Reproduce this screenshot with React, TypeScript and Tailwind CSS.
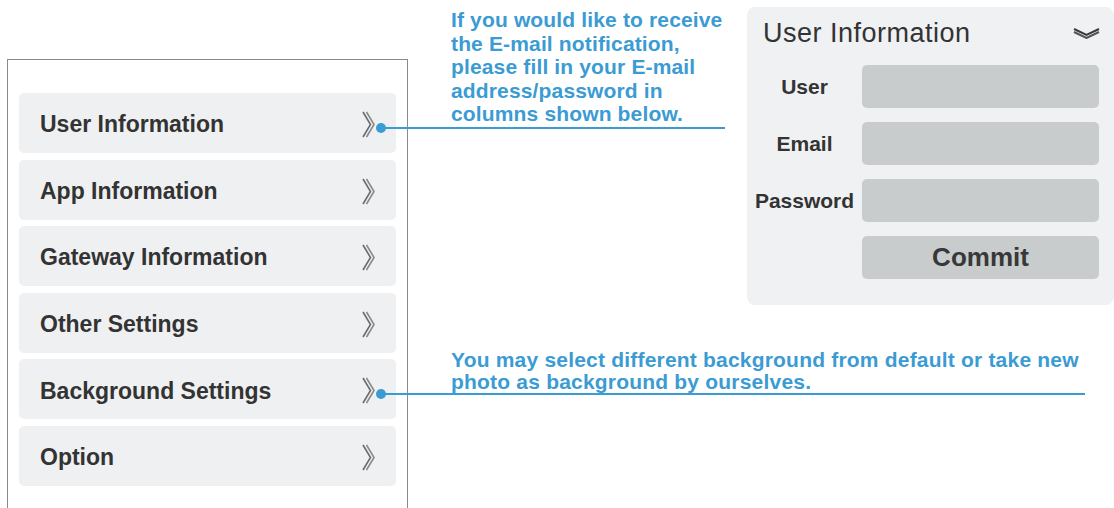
import React from "react";

const MENU = [
  "User Information",
  "App Information",
  "Gateway Information",
  "Other Settings",
  "Background Settings",
  "Option",
];

const FIELDS = ["User", "Email", "Password"];

// double-stroke chevron like the "》" glyph
const RightChevron = () => (
  <svg width="13" height="27" viewBox="0 0 13 27" fill="none">
    <polyline points="1,1 8.5,13.5 1,26" stroke="#6b6b6b" strokeWidth="1.6" strokeLinejoin="miter" />
    <polyline points="4.5,1 12,13.5 4.5,26" stroke="#8a8a8a" strokeWidth="1.6" strokeLinejoin="miter" />
  </svg>
);

const DownChevron = () => (
  <svg width="27" height="11" viewBox="0 0 27 11" fill="none">
    <polyline points="1,1 13.5,7 26,1" stroke="#3a3a3a" strokeWidth="2" />
    <polyline points="1,4 13.5,10 26,4" stroke="#555" strokeWidth="2" />
  </svg>
);

const MenuRow = ({ label }: { label: string }) => (
  <div className="flex h-[60px] items-center justify-between rounded-[5px] bg-[#eff0f2] pl-[21px] pr-[21px] pt-[3px]">
    <span className="text-[23px] font-bold text-[#333]">{label}</span>
    <RightChevron />
  </div>
);

const App = () => {
  return (
    <div
      className="relative flex h-[508px] w-[1114px] overflow-hidden bg-white"
      style={{ fontFamily: '"Liberation Sans", Arial, sans-serif' }}
    >
      {/* phone settings menu */}
      <div className="ml-[7px] mt-[59px] flex h-[449px] w-[401px] shrink-0 flex-col gap-[6.6px] border border-b-0 border-[#8a8a8a] px-[11px] pt-[33px]">
        {MENU.map((m) => (
          <MenuRow key={m} label={m} />
        ))}
      </div>

      <div className="flex flex-1 flex-col">
        <div className="flex items-start">
          <p className="ml-[43px] mt-[8px] text-[21px] font-bold leading-[23.5px] tracking-[0.15px] text-[#3b9bd3]">
            If you would like to receive
            <br />
            the E-mail notification,
            <br />
            please fill in your E-mail
            <br />
            address/password in
            <br />
            columns shown below.
          </p>

          {/* expanded user information card */}
          <div className="ml-auto mt-[7px] flex h-[298px] w-[367px] flex-col rounded-[8px] bg-[#eff1f3] pb-[26px]">
            <div className="flex h-[52px] items-center justify-between pl-[16px] pr-[14px]">
              <span className="text-[27px] tracking-[0.5px] text-[#333]">User Information</span>
              <DownChevron />
            </div>
            <div className="mt-[6px] flex flex-col gap-[14px]">
              {FIELDS.map((f) => (
                <div key={f} className="flex items-center">
                  <span className="w-[115px] text-center text-[21px] font-bold text-[#333]">{f}</span>
                  <div className="h-[43px] w-[237px] rounded-[5px] bg-[#c9cccc]" />
                </div>
              ))}
              <div className="flex">
                <div className="w-[115px]" />
                <button className="h-[43px] w-[237px] rounded-[5px] bg-[#c9cccc] text-[26px] font-bold text-[#383838]">
                  Commit
                </button>
              </div>
            </div>
          </div>
        </div>

        <p className="ml-[43px] mt-[44px] text-[21px] font-bold leading-[22px] tracking-[0.2px] text-[#3b9bd3]">
          You may select different background from default or take new
          <br />
          photo as background by ourselves.
        </p>
      </div>

      {/* leader lines */}
      <div className="absolute left-[381px] top-[127px] h-[1.5px] w-[344px] bg-[#3b9bd3]" />
      <div className="absolute left-[376px] top-[123px] size-[10px] rounded-full bg-[#3b9bd3]" />
      <div className="absolute left-[381px] top-[393px] h-[1.5px] w-[704px] bg-[#3b9bd3]" />
      <div className="absolute left-[376px] top-[389px] size-[10px] rounded-full bg-[#3b9bd3]" />
    </div>
  );
};

export default App;
